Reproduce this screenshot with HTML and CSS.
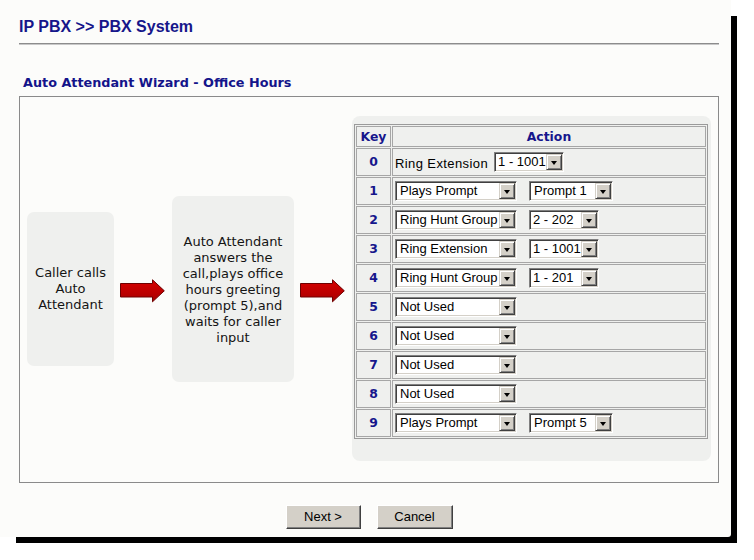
FILE: index.html
```html
<!DOCTYPE html>
<html>
<head>
<meta charset="utf-8">
<title>PBX System</title>
<link rel="stylesheet" href="styles.css">
</head>
<body>
<div class="page">
  <h1 class="title">IP PBX &gt;&gt; PBX System</h1>
  <div class="rule"></div>
  <h2 class="subtitle">Auto Attendant Wizard - Office Hours</h2>

  <div class="wizard">
    <div class="step step-1">Caller calls<br>Auto<br>Attendant</div>
    <svg class="arrow" width="45" height="24" viewBox="0 0 45 24">
      <defs>
        <linearGradient id="ag1" x1="0" y1="0" x2="0" y2="1">
          <stop offset="0" stop-color="#d80000"/>
          <stop offset="1" stop-color="#a80000"/>
        </linearGradient>
      </defs>
      <path d="M0.5 4.5 H32.5 V0.8 L44.3 11.8 L32.5 22.8 V18 H0.5 Z" fill="url(#ag1)" stroke="#6e0000" stroke-width="1"/>
    </svg>
    <div class="step step-2">Auto Attendant<br>answers the<br>call,plays office<br>hours greeting<br>(prompt 5),and<br>waits for caller<br>input</div>
    <svg class="arrow" width="45" height="24" viewBox="0 0 45 24">
      <defs>
        <linearGradient id="ag2" x1="0" y1="0" x2="0" y2="1">
          <stop offset="0" stop-color="#d80000"/>
          <stop offset="1" stop-color="#a80000"/>
        </linearGradient>
      </defs>
      <path d="M0.5 4.5 H32.5 V0.8 L44.3 11.8 L32.5 22.8 V18 H0.5 Z" fill="url(#ag2)" stroke="#6e0000" stroke-width="1"/>
    </svg>

    <div class="panel">
      <table class="keys">
        <tr>
          <th><div class="hk">Key</div></th>
          <th><div class="ha">Action</div></th>
        </tr>
        <tr>
          <td><div class="k">0</div></td>
          <td><div class="a"><span class="label">Ring Extension</span><span class="sel w68 after-label"><span class="sel-text">1 - 1001</span><span class="sel-btn"></span></span></div></td>
        </tr>
        <tr>
          <td><div class="k">1</div></td>
          <td><div class="a"><span class="sel w122"><span class="sel-text">Plays Prompt</span><span class="sel-btn"></span></span><span class="sel w83 second"><span class="sel-text">Prompt 1</span><span class="sel-btn"></span></span></div></td>
        </tr>
        <tr>
          <td><div class="k">2</div></td>
          <td><div class="a"><span class="sel w122"><span class="sel-text">Ring Hunt Group</span><span class="sel-btn"></span></span><span class="sel w68 second"><span class="sel-text">2 - 202</span><span class="sel-btn"></span></span></div></td>
        </tr>
        <tr>
          <td><div class="k">3</div></td>
          <td><div class="a"><span class="sel w122"><span class="sel-text">Ring Extension</span><span class="sel-btn"></span></span><span class="sel w68 second"><span class="sel-text">1 - 1001</span><span class="sel-btn"></span></span></div></td>
        </tr>
        <tr>
          <td><div class="k">4</div></td>
          <td><div class="a"><span class="sel w122"><span class="sel-text">Ring Hunt Group</span><span class="sel-btn"></span></span><span class="sel w68 second"><span class="sel-text">1 - 201</span><span class="sel-btn"></span></span></div></td>
        </tr>
        <tr>
          <td><div class="k">5</div></td>
          <td><div class="a"><span class="sel w122"><span class="sel-text">Not Used</span><span class="sel-btn"></span></span></div></td>
        </tr>
        <tr>
          <td><div class="k">6</div></td>
          <td><div class="a"><span class="sel w122"><span class="sel-text">Not Used</span><span class="sel-btn"></span></span></div></td>
        </tr>
        <tr>
          <td><div class="k">7</div></td>
          <td><div class="a"><span class="sel w122"><span class="sel-text">Not Used</span><span class="sel-btn"></span></span></div></td>
        </tr>
        <tr>
          <td><div class="k">8</div></td>
          <td><div class="a"><span class="sel w122"><span class="sel-text">Not Used</span><span class="sel-btn"></span></span></div></td>
        </tr>
        <tr>
          <td><div class="k">9</div></td>
          <td><div class="a"><span class="sel w122"><span class="sel-text">Plays Prompt</span><span class="sel-btn"></span></span><span class="sel w83 second"><span class="sel-text">Prompt 5</span><span class="sel-btn"></span></span></div></td>
        </tr>
      </table>
    </div>
  </div>

  <div class="actions">
    <button class="btn btn-next">Next &gt;</button>
    <button class="btn btn-cancel">Cancel</button>
  </div>
</div>
</body>
</html>
```

FILE: styles.css
```css
html, body {
  margin: 0;
  padding: 0;
  background: #ffffff;
}

body {
  min-height: 560px;
}

.page {
  box-sizing: border-box;
  width: 731px;
  height: 537px;
  background: #fcfcfa;
  padding: 18px 12px 0 19px;
  box-shadow: 11px 11px 0 -5px #000;
  border-radius: 0 0 3px 0;
}

.title {
  margin: 0;
  font: bold 16px/18px "Liberation Sans", Arial, sans-serif;
  color: #16168a;
}

.rule {
  margin-top: 7px;
  height: 1px;
  width: 700px;
  background: #8c8c8c;
  border-bottom: 1px solid #c8c8c8;
}

.subtitle {
  margin: 30px 0 5px 4px;
  font: bold 12.8px/16px "DejaVu Sans", Verdana, sans-serif;
  color: #14148a;
}

.wizard {
  box-sizing: border-box;
  width: 700px;
  border: 1px solid #8a8a8a;
  padding: 19px 7px 21px 7px;
  display: flex;
  align-items: center;
}

.step {
  box-sizing: border-box;
  background: #eff0ee;
  border-radius: 7px;
  display: flex;
  align-items: center;
  justify-content: center;
  text-align: center;
  font: 13px/16px "DejaVu Sans", Verdana, sans-serif;
  color: #141414;
  white-space: nowrap;
}

.step-1 {
  width: 87px;
  height: 154px;
  padding-top: 1px;
}

.step-2 {
  width: 122px;
  height: 186px;
  padding-top: 2px;
}

.arrow {
  display: block;
  flex: none;
  margin: 4px 7px 0 6px;
}

.panel {
  box-sizing: border-box;
  width: 359px;
  background: #eff0ee;
  border-radius: 8px;
  padding: 8px 3px 22px 2px;
}

.keys {
  border-collapse: separate;
  border-spacing: 1px;
  border: 1px solid #9a9a9a;
}

.keys th,
.keys td {
  padding: 0;
  border: 1px solid #a6a6a6;
}

.hk, .ha {
  height: 19px;
  display: flex;
  align-items: center;
  justify-content: center;
  font: bold 12.4px/16px "DejaVu Sans", Verdana, sans-serif;
  color: #16168c;
}

.hk { width: 33px; }
.ha { width: 312px; }

.k {
  width: 33px;
  height: 26px;
  display: flex;
  align-items: center;
  justify-content: center;
  font: bold 12.4px/16px "DejaVu Sans", Verdana, sans-serif;
  color: #16168c;
}

.a {
  box-sizing: border-box;
  width: 312px;
  height: 26px;
  padding-left: 2px;
  display: flex;
  align-items: center;
}

.label {
  font: 13px/16px "Liberation Sans", Arial, sans-serif;
  letter-spacing: 0.4px;
  color: #000;
  margin-top: 3px;
}

.sel {
  box-sizing: border-box;
  display: inline-flex;
  height: 20px;
  border: 1px solid;
  border-color: #808080 #ffffff #ffffff #808080;
  box-shadow: inset 1px 1px 0 #404040, inset -1px -1px 0 #d4d0c8;
  background: #ffffff;
  padding: 1px;
  flex: none;
}

.w122 { width: 122px; }
.w83 { width: 84px; }
.w68 { width: 70px; }

.second { margin-left: 12px; }
.after-label { margin-left: 6px; }

.sel-text {
  flex: 1;
  min-width: 0;
  padding-left: 3px;
  font: 13px/16px "Liberation Sans", Arial, sans-serif;
  color: #000;
  white-space: nowrap;
  overflow: hidden;
}

.w68 .sel-text {
  padding-left: 2px;
}

.sel-btn {
  box-sizing: border-box;
  width: 16px;
  height: 16px;
  flex: none;
  background: #d4d0c8;
  border: 1px solid;
  border-color: #d4d0c8 #404040 #404040 #d4d0c8;
  box-shadow: inset 1px 1px 0 #ffffff, inset -1px -1px 0 #808080;
  display: flex;
  align-items: center;
  justify-content: center;
}

.sel-btn::after {
  content: "";
  display: block;
  width: 0;
  height: 0;
  border-left: 3.5px solid transparent;
  border-right: 3.5px solid transparent;
  border-top: 4px solid #000;
  margin-top: 1px;
}

.actions {
  width: 700px;
  margin-top: 22px;
  display: flex;
  justify-content: center;
  gap: 16px;
}

.btn {
  box-sizing: border-box;
  height: 24px;
  background: #d4d0c8;
  border: 1px solid;
  border-color: #ffffff #404040 #404040 #ffffff;
  box-shadow: inset -1px -1px 0 #808080;
  font: 13px/16px "Liberation Sans", Arial, sans-serif;
  color: #000;
  padding: 0;
}

.btn-next { width: 75px; }
.btn-cancel { width: 76px; }
```
